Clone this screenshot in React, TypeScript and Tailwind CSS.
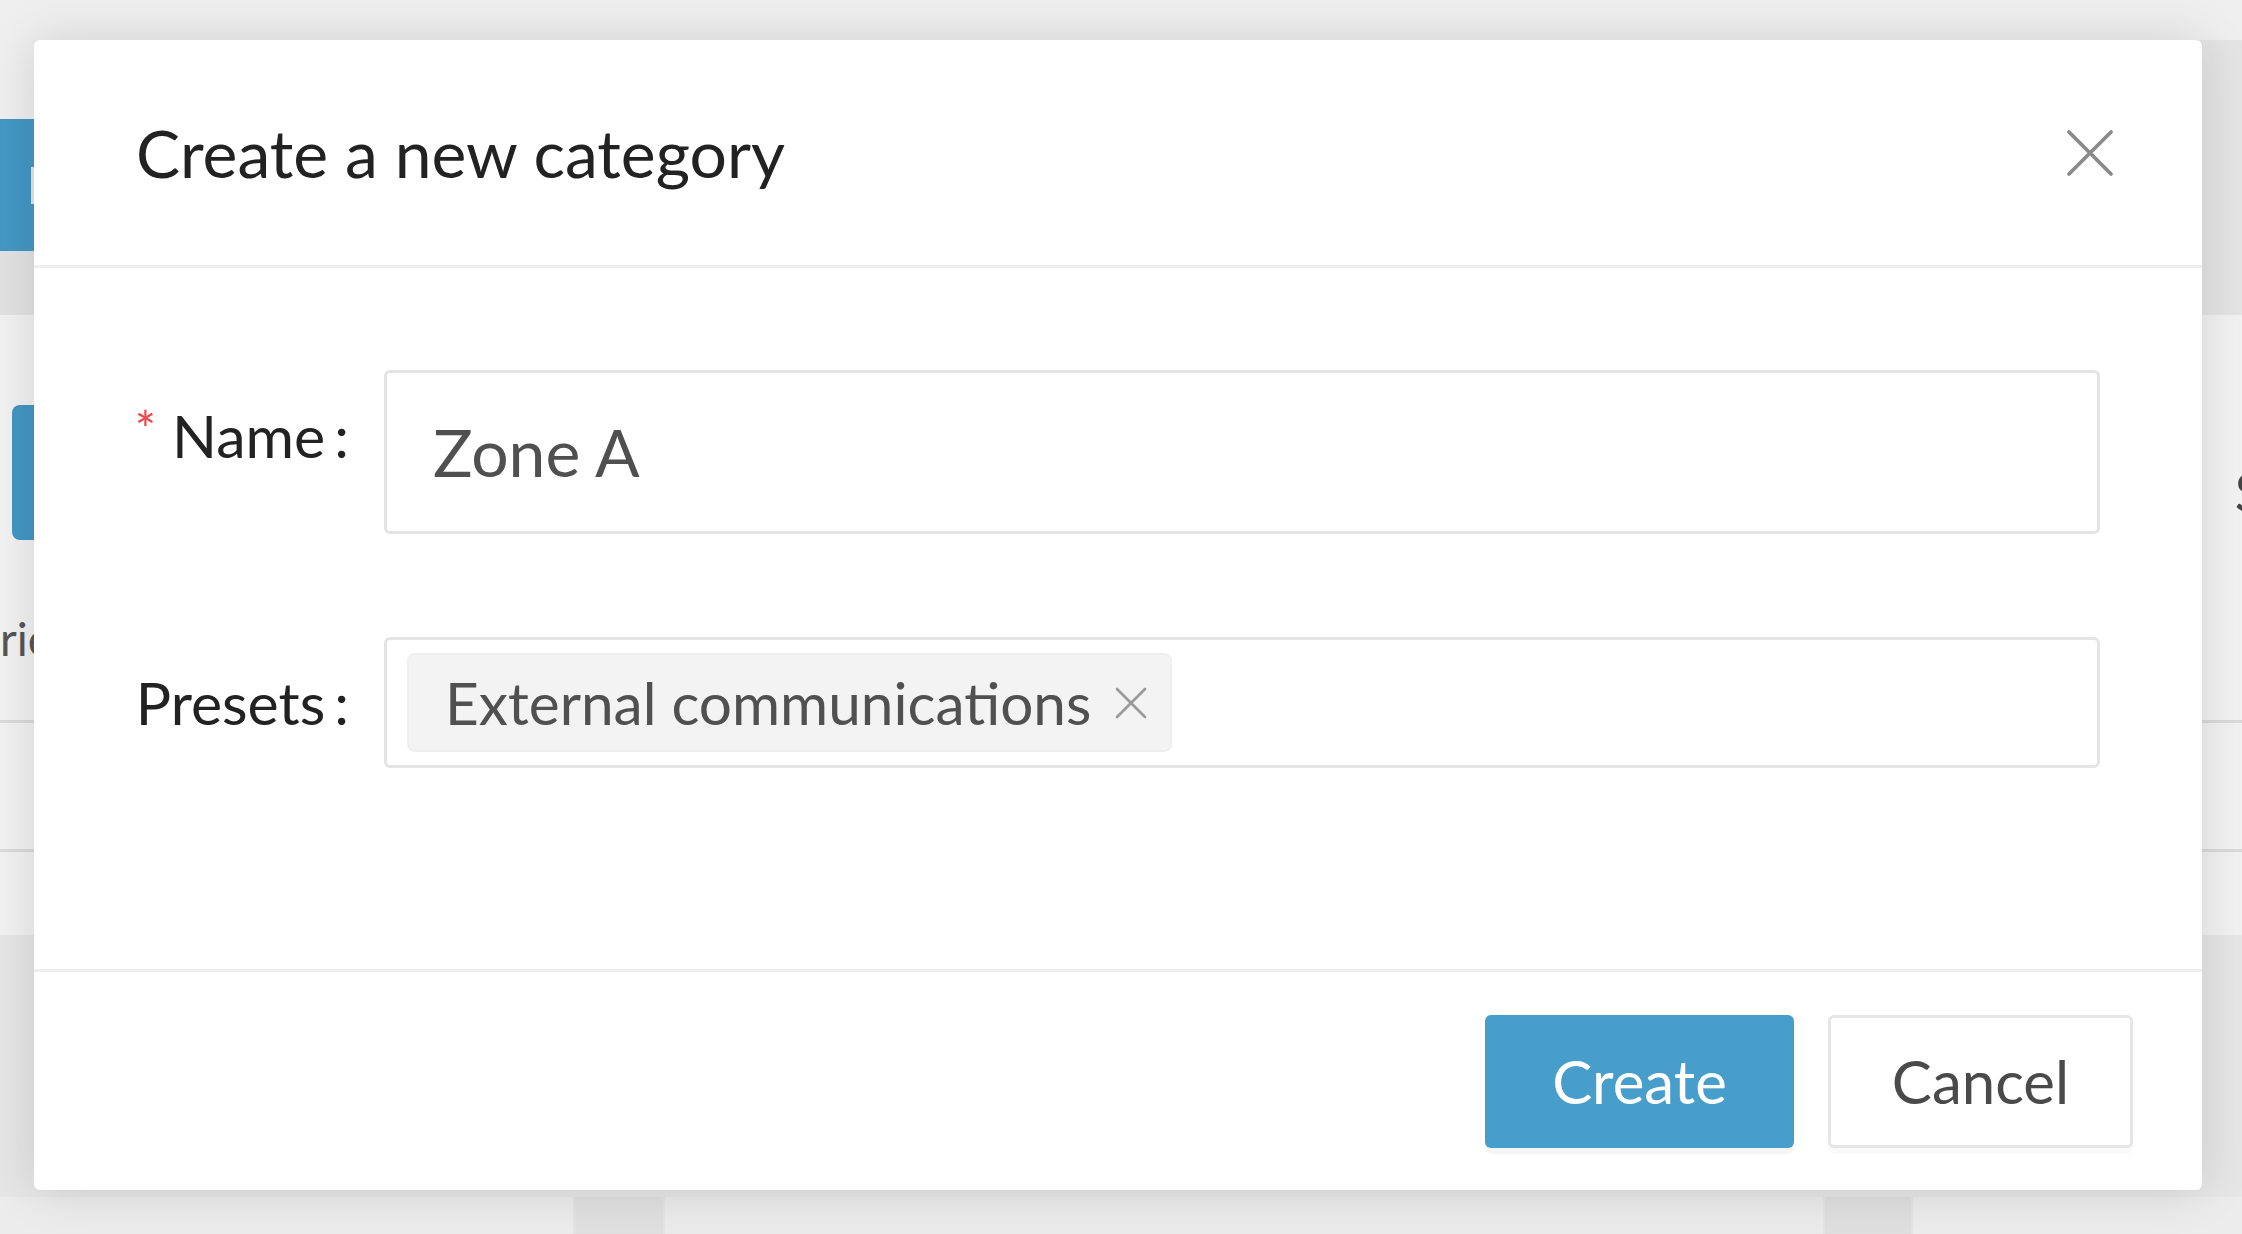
import React from "react";

const font = { fontFamily: "Lato, 'Open Sans', sans-serif" };

function CrossIcon({ size, color, stroke }: { size: number; color: string; stroke: number }) {
  return (
    <svg width={size} height={size} viewBox="0 0 48 48" fill="none">
      <path d="M3 3L45 45M45 3L3 45" stroke={color} strokeWidth={stroke} strokeLinecap="round" />
    </svg>
  );
}

function BackgroundPage() {
  return (
    <div className="flex h-full flex-col">
      {/* top bar of the page behind */}
      <div className="flex h-[315px]">
        <div className="flex w-[300px] flex-col">
          <div className="h-[119px] bg-[#efefef]" />
          <div className="flex h-[132px] items-center bg-[#4497c5] pl-[31px]">
            <div className="h-[37px] w-[60px] bg-[#e6e6e6]" />
          </div>
          <div className="flex-1 bg-[#e2e2e2]" />
        </div>
        <div className="flex flex-1 flex-col">
          <div className="h-[40px] bg-[#efefef]" />
          <div className="flex-1 bg-[#e4e4e4]" />
        </div>
      </div>

      <div className="flex h-[405px] justify-between bg-[#f2f2f2]">
        <div className="flex flex-col">
          <div className="ml-[12px] mt-[90px] h-[135px] w-[160px] rounded-[8px] bg-[#4396c4]" />
          <div className="mt-[76px] text-[46px] leading-none text-[#555]" style={font}>
            rie
          </div>
        </div>
        <div className="-mr-[22px] mt-[150px] text-[54px] leading-none text-[#444]" style={font}>
          S
        </div>
      </div>
      <div className="h-[3px] bg-[#dadada]" />
      <div className="h-[126px] bg-[#f2f2f2]" />
      <div className="h-[3px] bg-[#dadada]" />
      <div className="h-[83px] bg-[#f2f2f2]" />
      <div className="h-[262px] bg-[#e6e6e6]" />
      <div className="flex flex-1">
        <div className="w-[573px] bg-[#ececec]" />
        <div className="w-[92px] border-x-2 border-[#e4e4e4] bg-[#e0e0e0]" />
        <div className="w-[1158px] bg-[#ebebeb]" />
        <div className="w-[90px] border-x-2 border-[#e4e4e4] bg-[#dfdfdf]" />
        <div className="flex-1 bg-[#ececec]" />
      </div>
    </div>
  );
}

function FieldLabel({ text, required }: { text: string; required?: boolean }) {
  return (
    <div className="flex h-[131px] w-[213px] shrink-0 items-center justify-end">
      {required && (
        <span className="mr-[16px] -mt-[14px] text-[50px] leading-none text-[#f04848]">*</span>
      )}
      <span className="text-[59px] leading-none text-[#222]">{text}</span>
      <span className="ml-[9px] text-[59px] leading-none text-[#222]">:</span>
    </div>
  );
}

export default function App() {
  return (
    <div className="relative h-[1234px] w-[2242px] overflow-hidden bg-[#f1f1f1]" style={font}>
      <BackgroundPage />

      {/* modal */}
      <div className="absolute left-[34px] top-[40px] flex h-[1150px] w-[2168px] flex-col rounded-[6px] bg-white shadow-[0_0_50px_rgba(0,0,0,0.13)]">
        <div className="flex h-[228px] shrink-0 items-center justify-between border-b-[3px] border-[#efefef] pl-[102px] pr-[88px]">
          <h2 className="text-[66px] leading-none text-[#222]">Create a new category</h2>
          <button className="flex h-[49px] w-[48px] items-center justify-center">
            <CrossIcon size={48} color="#8a8a8a" stroke={3.8} />
          </button>
        </div>

        <div className="flex flex-1 flex-col px-[102px] pt-[102px]">
          <div className="flex items-start gap-[35px]">
            <FieldLabel text="Name" required />
            <div className="flex h-[164px] flex-1 items-center rounded-[6px] border-[3px] border-[#e4e4e4] px-[46px]">
              <span className="text-[66px] leading-none text-[#505050]">Zone A</span>
            </div>
          </div>

          <div className="mt-[103px] flex items-start gap-[35px]">
            <FieldLabel text="Presets" />
            <div className="flex h-[131px] flex-1 items-center rounded-[6px] border-[3px] border-[#e4e4e4] px-[20px]">
              <div className="flex h-[99px] items-center gap-[24px] rounded-[8px] border-2 border-[#efefef] bg-[#f3f3f3] pl-[36px] pr-[23px]">
                <span className="text-[58.5px] leading-none text-[#505050]">External communications</span>
                <CrossIcon size={32} color="#9a9a9a" stroke={4} />
              </div>
            </div>
          </div>
        </div>

        <div className="flex h-[221px] shrink-0 items-center justify-end gap-[34px] border-t-[3px] border-[#efefef] pr-[69px]">
          <button className="flex h-[133px] w-[309px] items-center justify-center rounded-[6px] bg-[#479ecb] text-[60px] leading-none text-white shadow-[0_6px_0_rgba(0,0,0,0.04)]">
            Create
          </button>
          <button className="flex h-[133px] w-[305px] items-center justify-center rounded-[6px] border-[3px] border-[#e6e6e6] bg-white text-[60px] leading-none text-[#4a4a4a] shadow-[0_6px_0_rgba(0,0,0,0.02)]">
            Cancel
          </button>
        </div>
      </div>
    </div>
  );
}
